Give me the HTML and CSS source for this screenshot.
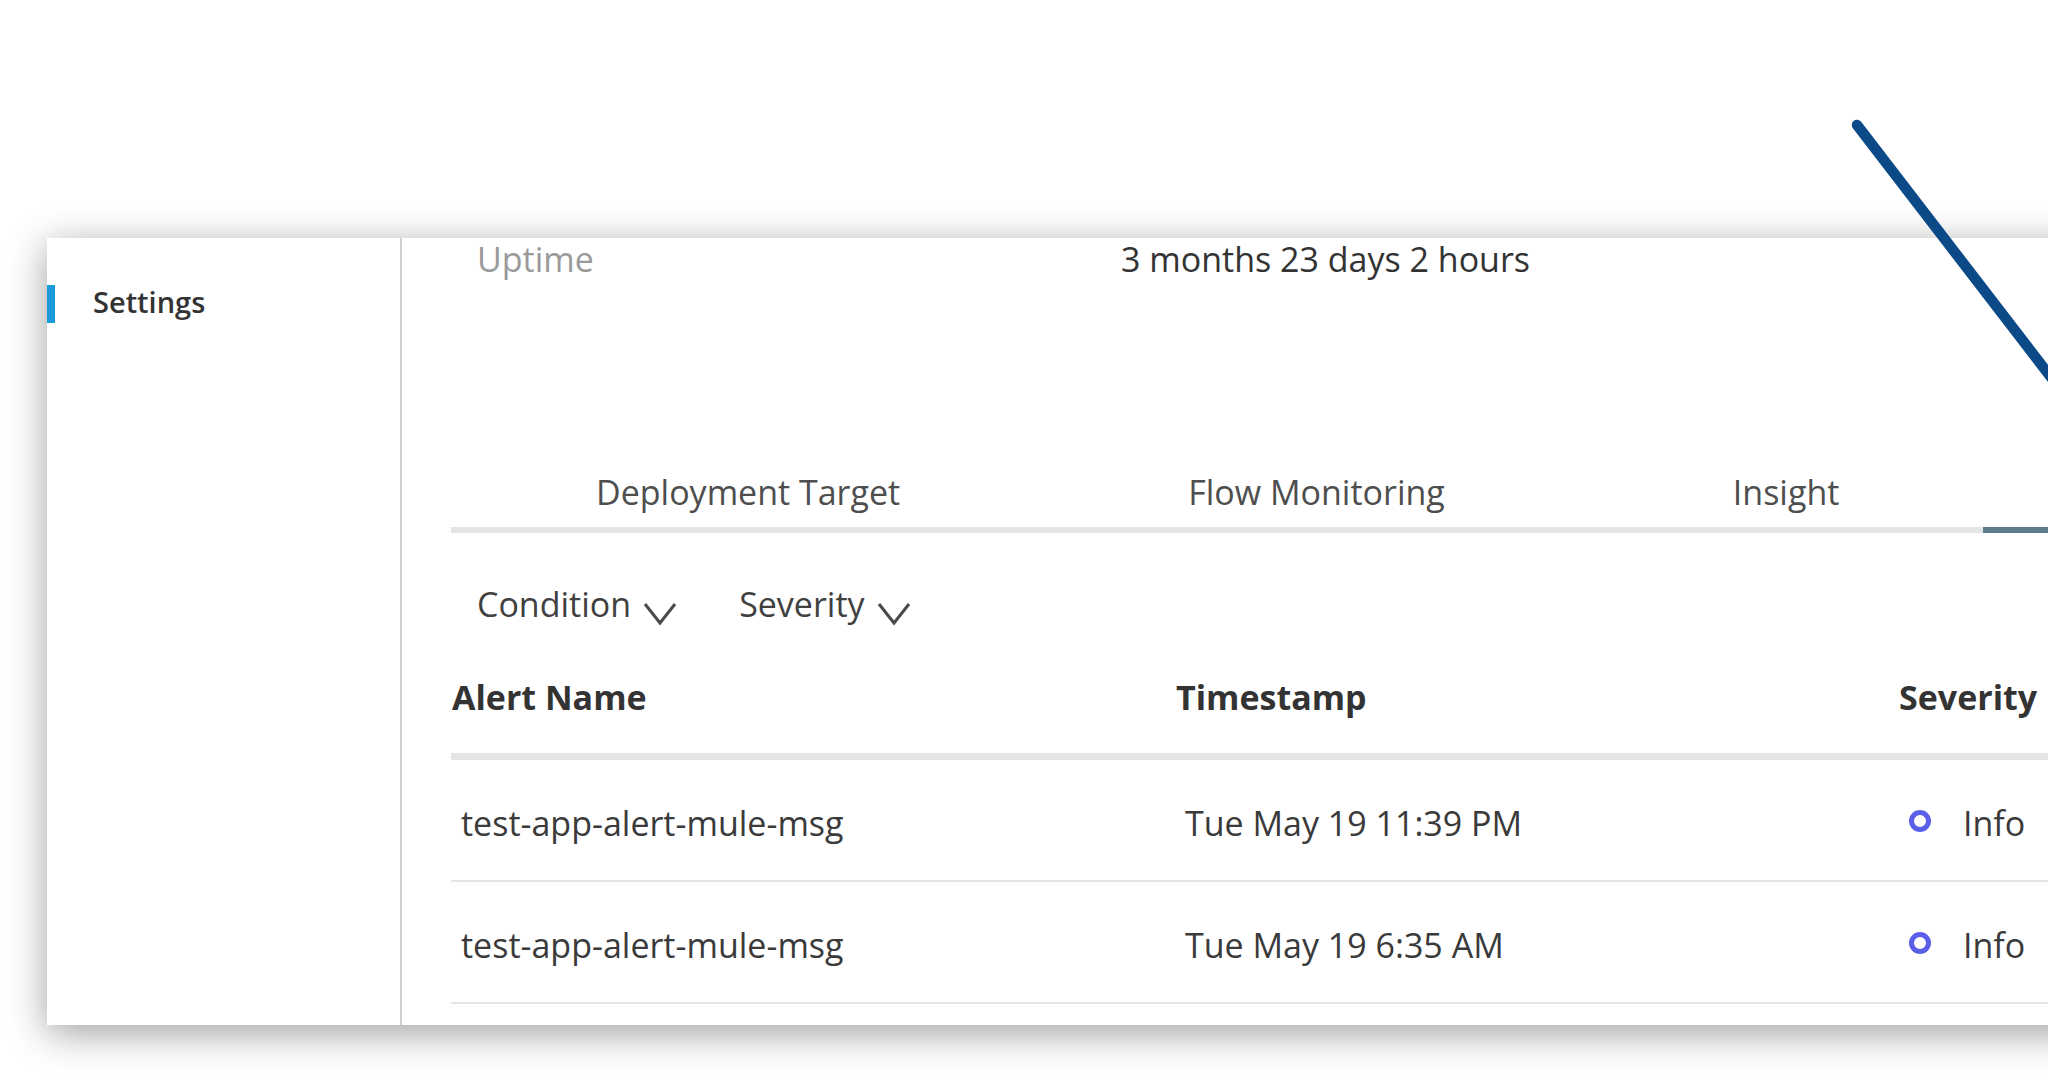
FILE: index.html
```html
<!DOCTYPE html>
<html lang="en">
<head>
<meta charset="utf-8">
<title>Alerts</title>
<link rel="stylesheet" href="styles.css">
</head>
<body>
<div class="stage">
  <div class="card">
    <aside class="sidebar">
      <div class="nav-item active">Settings</div>
    </aside>
    <main class="main">
      <dl class="info">
        <dt class="info-label">Uptime</dt>
        <dd class="info-value">3 months 23 days 2 hours</dd>
      </dl>
      <nav class="tabs">
        <div class="tab">Deployment Target</div>
        <div class="tab">Flow Monitoring</div>
        <div class="tab">Insight</div>
        <div class="tab tab-active" aria-label="Alerts"></div>
      </nav>
      <div class="filters">
        <div class="filter">
          <span class="filter-label">Condition</span>
          <svg class="chevron" width="34" height="25" viewBox="0 0 34 25"><polyline points="2,3 17,22 32,3" fill="none" stroke="#4a4a4a" stroke-width="3"/></svg>
        </div>
        <div class="filter">
          <span class="filter-label">Severity</span>
          <svg class="chevron" width="34" height="25" viewBox="0 0 34 25"><polyline points="2,3 17,22 32,3" fill="none" stroke="#4a4a4a" stroke-width="3"/></svg>
        </div>
      </div>
      <div class="table">
        <div class="row head">
          <div class="cell">Alert Name</div>
          <div class="cell">Timestamp</div>
          <div class="cell">Severity</div>
        </div>
        <div class="row">
          <div class="cell">test-app-alert-mule-msg</div>
          <div class="cell">Tue May 19 11:39 PM</div>
          <div class="cell sev"><span class="dot"></span>Info</div>
        </div>
        <div class="row">
          <div class="cell">test-app-alert-mule-msg</div>
          <div class="cell">Tue May 19 6:35 AM</div>
          <div class="cell sev"><span class="dot"></span>Info</div>
        </div>
      </div>
    </main>
  </div>
  <svg class="annotation" width="2048" height="1074" viewBox="0 0 2048 1074">
    <line x1="1857" y1="125" x2="2110" y2="454" stroke="#0b4a86" stroke-width="10.5" stroke-linecap="round"/>
  </svg>
</div>
</body>
</html>
```

FILE: styles.css
```css
* { box-sizing: border-box; }
html, body {
  margin: 0;
  padding: 0;
  background: #ffffff;
}
body {
  width: 2048px;
  height: 1074px;
  overflow: hidden;
  font-family: "Open Sans", "Noto Sans", "Liberation Sans", sans-serif;
  color: #3a3a3a;
}
.stage {
  position: relative;
  width: 2048px;
  height: 1074px;
  padding-top: 238px;
  padding-left: 47px;
}
.card {
  display: flex;
  width: 2120px;
  height: 787px;
  background: #ffffff;
  box-shadow: 0 8px 36px rgba(0, 0, 0, 0.38);
}
.sidebar {
  width: 355px;
  flex: none;
  border-right: 2px solid #cfcfcf;
  padding-top: 47px;
}
.nav-item {
  height: 38px;
  display: flex;
  align-items: center;
  border-left: 8px solid #1a9ad8;
  padding-left: 38px;
  padding-bottom: 5px;
  font-size: 29px;
  font-weight: 600;
  color: #333333;
}
.main {
  flex: 1;
  padding-left: 49px;
  font-size: 34px;
}
.info {
  display: grid;
  grid-template-columns: 644px 1fr;
  margin: 0;
  padding-left: 26px;
  line-height: 42px;
}
.info-label {
  color: #9a9a9a;
}
.info-value {
  margin: 0;
  color: #333333;
}
.tabs {
  display: flex;
  margin-top: 190px;
  padding-left: 1px;
  border-bottom: 6px solid #e4e5e7;
  line-height: 44px;
}
.tab {
  padding: 0 144px 13px;
  color: #4e4e4e;
  white-space: nowrap;
}
.tab-active {
  width: 300px;
  height: 63px;
  border-bottom: 6px solid #5f7c8d;
  margin-bottom: -6px;
}
.filters {
  display: flex;
  gap: 62px;
  margin-top: 48px;
  padding-left: 26px;
  line-height: 44px;
}
.filter {
  display: flex;
  align-items: center;
  gap: 12px;
  color: #404040;
}
.chevron {
  margin-top: 20px;
}
.table {
  margin-top: 49px;
}
.row {
  display: grid;
  grid-template-columns: 724px 723px 1fr;
  line-height: 44px;
  padding: 41px 0 35px;
  border-bottom: 2px solid #e4e5e7;
  white-space: nowrap;
}
.row .cell {
  padding-left: 10px;
}
.row.head {
  padding: 0 0 34px;
  border-bottom: 7px solid #e4e5e7;
  font-weight: 700;
  color: #333333;
}
.row.head .cell {
  padding-left: 1px;
}
.sev {
  display: flex;
  align-items: center;
}
.dot {
  width: 22px;
  height: 22px;
  border: 5px solid #5a5fe8;
  border-radius: 50%;
  margin-left: 1px;
  margin-right: 32px;
  margin-top: -4px;
}
.annotation {
  position: absolute;
  left: 0;
  top: 0;
  pointer-events: none;
}
```
